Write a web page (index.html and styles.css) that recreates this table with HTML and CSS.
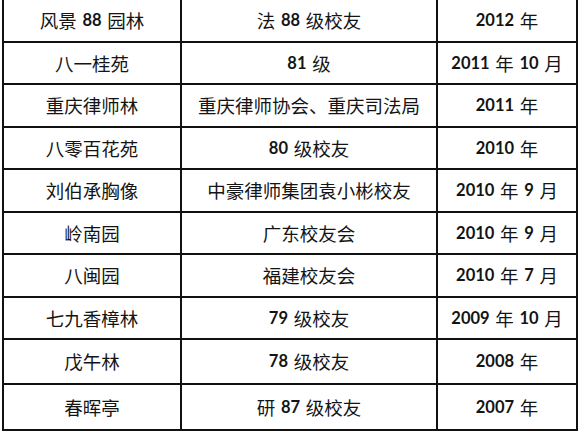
FILE: index.html
```html
<!DOCTYPE html>
<html lang="zh-CN">
<head>
<meta charset="utf-8">
<title>校友纪念林</title>
<link rel="stylesheet" href="styles.css">
</head>
<body>
<div class="table">
  <div class="cell">风景 <b>88</b> 园林</div><div class="cell">法 <b>88</b> 级校友</div><div class="cell"><b>2012</b> 年</div>
  <div class="cell">八一桂苑</div><div class="cell"><b>81</b> 级</div><div class="cell"><b>2011</b> 年 <b>10</b> 月</div>
  <div class="cell">重庆律师林</div><div class="cell">重庆律师协会、重庆司法局</div><div class="cell"><b>2011</b> 年</div>
  <div class="cell">八零百花苑</div><div class="cell"><b>80</b> 级校友</div><div class="cell"><b>2010</b> 年</div>
  <div class="cell">刘伯承胸像</div><div class="cell">中豪律师集团袁小彬校友</div><div class="cell"><b>2010</b> 年 <b>9</b> 月</div>
  <div class="cell">岭南园</div><div class="cell">广东校友会</div><div class="cell"><b>2010</b> 年 <b>9</b> 月</div>
  <div class="cell">八闽园</div><div class="cell">福建校友会</div><div class="cell"><b>2010</b> 年 <b>7</b> 月</div>
  <div class="cell">七九香樟林</div><div class="cell"><b>79</b> 级校友</div><div class="cell"><b>2009</b> 年 <b>10</b> 月</div>
  <div class="cell">戊午林</div><div class="cell"><b>78</b> 级校友</div><div class="cell"><b>2008</b> 年</div>
  <div class="cell">春晖亭</div><div class="cell">研 <b>87</b> 级校友</div><div class="cell"><b>2007</b> 年</div>
</div>
</body>
</html>
```
FILE: styles.css
```css
html, body {
  margin: 0;
  padding: 0;
  background: #ffffff;
}

body {
  overflow: hidden;
}

.table {
  display: grid;
  grid-template-columns: 178px 256px 140px;
  grid-template-rows: repeat(8, 42.5px) 45px 46px;
  width: max-content;
  margin: -2px 0 0 2px;
  border-left: 2px solid #111;
  border-top: 2px solid #111;
  font-family: "Noto Sans CJK SC", "Noto Sans", sans-serif;
  font-size: 18.5px;
  color: #141414;
}

.cell {
  box-sizing: border-box;
  display: flex;
  align-items: center;
  justify-content: center;
  border-right: 2px solid #111;
  border-bottom: 2px solid #111;
  white-space: pre;
  word-spacing: 1.5px;
  line-height: 1;
}

.cell b {
  font-family: Lato, "Liberation Sans", sans-serif;
  font-weight: 700;
  font-size: 16.5px;
}
```
